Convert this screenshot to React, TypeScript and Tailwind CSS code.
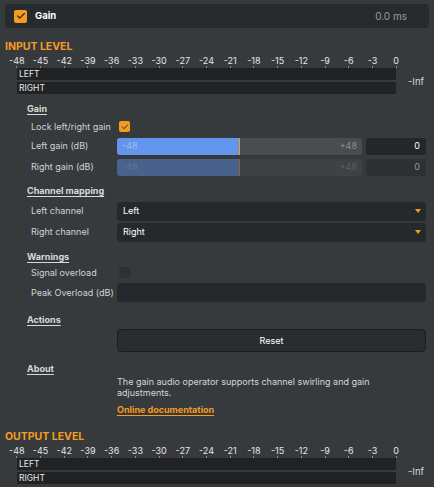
import { Check } from 'lucide-react'

const ticks = [-48, -45, -42, -39, -36, -33, -30, -27, -24, -21, -18, -15, -12, -9, -6, -3, 0]

function LevelMeter({ title }: { title: string }) {
  return (
    <div className="pl-[5px]">
      <div className="text-[10.5px] font-bold leading-[14px] text-[#f39c1f]">{title}</div>
      <div className="grid w-[403px] grid-cols-[repeat(17,minmax(0,1fr))] pt-[1px]">
        {ticks.map((t) => (
          <div key={t} className="flex flex-col items-center">
            <span className="text-[9px] leading-[11px] text-[#e6e6e6]">{t}</span>
            <span className="h-[2px] w-px bg-[#8a8d90]" />
          </div>
        ))}
      </div>
      <div className="flex items-center">
        <div className="ml-[12px] flex w-[379px] flex-col gap-[2px]">
          <div className="h-[12px] bg-[#202224] pl-[2px] text-[8.5px] leading-[12px] text-[#e8e8e8]">LEFT</div>
          <div className="h-[12px] bg-[#202224] pl-[2px] text-[8.5px] leading-[12px] text-[#e8e8e8]">RIGHT</div>
        </div>
        <span className="ml-[12px] pt-[2px] text-[9.5px] text-[#d8d8d8]">-Inf</span>
      </div>
    </div>
  )
}

function SectionTitle({ children }: { children: string }) {
  return (
    <div className="pl-[27px] text-[9px] font-bold leading-[12px] text-[#d9d9d9] underline underline-offset-[2px]">
      {children}
    </div>
  )
}

function Row({ label, children }: { label: string; children?: React.ReactNode }) {
  return (
    <div className="flex items-center">
      <span className="w-[117px] shrink-0 whitespace-nowrap pl-[31px] text-[9px] text-[#d2d2d2]">{label}</span>
      {children}
    </div>
  )
}

function GainSlider({ disabled }: { disabled?: boolean }) {
  return (
    <div className={`flex w-full gap-[4px] ${disabled ? 'opacity-45' : ''}`}>
      <div className="relative flex h-[17px] flex-1 items-center overflow-hidden rounded-[3px] bg-[#4a4c4e]">
        <div className="absolute inset-y-0 left-0 w-[123px] border-r border-[#f39c1f] bg-[#6495ed]" />
        <span className="relative pl-[5px] text-[9px] text-[#9fbdf3]">-48</span>
        <span className="relative ml-auto pr-[5px] text-[9px] text-[#8c8e90]">+48</span>
      </div>
      <div className="flex h-[17px] w-[60px] items-center justify-end rounded-[3px] bg-[#242628] pr-[6px] text-[9px] text-white">
        0
      </div>
    </div>
  )
}

function Select({ value }: { value: string }) {
  return (
    <div className="flex h-[19px] w-[309px] items-center rounded-[3px] bg-[#26292b] pl-[6px] pr-[5px] text-[9px] text-white">
      {value}
      <svg className="ml-auto" width="6" height="4" viewBox="0 0 6 4">
        <path d="M0 0H6L3 4Z" fill="#f39c1f" />
      </svg>
    </div>
  )
}

export default function App() {
  return (
    <div className="min-h-[487px] w-[434px] bg-[#363a3d] pt-[4px] font-['Inter',sans-serif] text-[#d2d2d2]">
      <div className="mx-[5px] flex h-[24px] items-center rounded-[4px] bg-[#282b2d] pl-[9px] pr-[22px]">
        <span className="flex h-[13px] w-[13px] items-center justify-center rounded-[2px] bg-[#f39c1f]">
          <Check size={10} strokeWidth={3} color="#2a2a2a" />
        </span>
        <span className="ml-[8px] text-[9.5px] font-bold text-white">Gain</span>
        <span className="ml-auto text-[10px] text-[#9a9c9e]">0.0 ms</span>
      </div>

      <div className="mt-[12px]">
        <LevelMeter title="INPUT LEVEL" />
      </div>

      <div className="mt-[9px] flex flex-col pr-[8px]">
        <SectionTitle>Gain</SectionTitle>
        <div className="mt-[5px] flex flex-col gap-[4px]">
          <Row label="Lock left/right gain">
            <span className="ml-[2px] flex h-[11px] w-[11px] items-center justify-center rounded-[2px] bg-[#f39c1f]">
              <Check size={8} strokeWidth={3} color="#2a2a2a" />
            </span>
          </Row>
          <Row label="Left gain (dB)">
            <GainSlider />
          </Row>
          <Row label="Right gain (dB)">
            <GainSlider disabled />
          </Row>
        </div>

        <div className="mt-[9px]">
          <SectionTitle>Channel mapping</SectionTitle>
        </div>
        <div className="mt-[5px] flex flex-col gap-[2px]">
          <Row label="Left channel">
            <Select value="Left" />
          </Row>
          <Row label="Right channel">
            <Select value="Right" />
          </Row>
        </div>

        <div className="mt-[9px]">
          <SectionTitle>Warnings</SectionTitle>
        </div>
        <div className="mt-[3px] flex flex-col gap-[4px]">
          <Row label="Signal overload">
            <span className="ml-[2px] h-[11px] w-[11px] rounded-[2px] bg-[#2e3133]" />
          </Row>
          <Row label="Peak Overload (dB)">
            <div className="h-[19px] w-[309px] rounded-[3px] bg-[#26292b]" />
          </Row>
        </div>

        <div className="mt-[12px]">
          <SectionTitle>Actions</SectionTitle>
        </div>
        <div className="mt-[3px]">
          <Row label="">
            <button
              type="button"
              className="h-[23px] w-[309px] rounded-[4px] border border-[#1b1d1e] bg-[#2a2d2f] text-[9px] text-white"
            >
              Reset
            </button>
          </Row>
        </div>

        <div className="mt-[11px]">
          <SectionTitle>About</SectionTitle>
        </div>
        <div className="ml-[117px] mt-[1px] text-[9px] leading-[11px] text-[#d6d6d6]">
          <p>The gain audio operator supports channel swirling and gain adjustments.</p>
          <a className="mt-[6px] inline-block font-bold text-[#f39c1f] underline underline-offset-[2px]">
            Online documentation
          </a>
        </div>
      </div>

      <div className="mt-[15px] pb-[4px]">
        <LevelMeter title="OUTPUT LEVEL" />
      </div>
    </div>
  )
}
